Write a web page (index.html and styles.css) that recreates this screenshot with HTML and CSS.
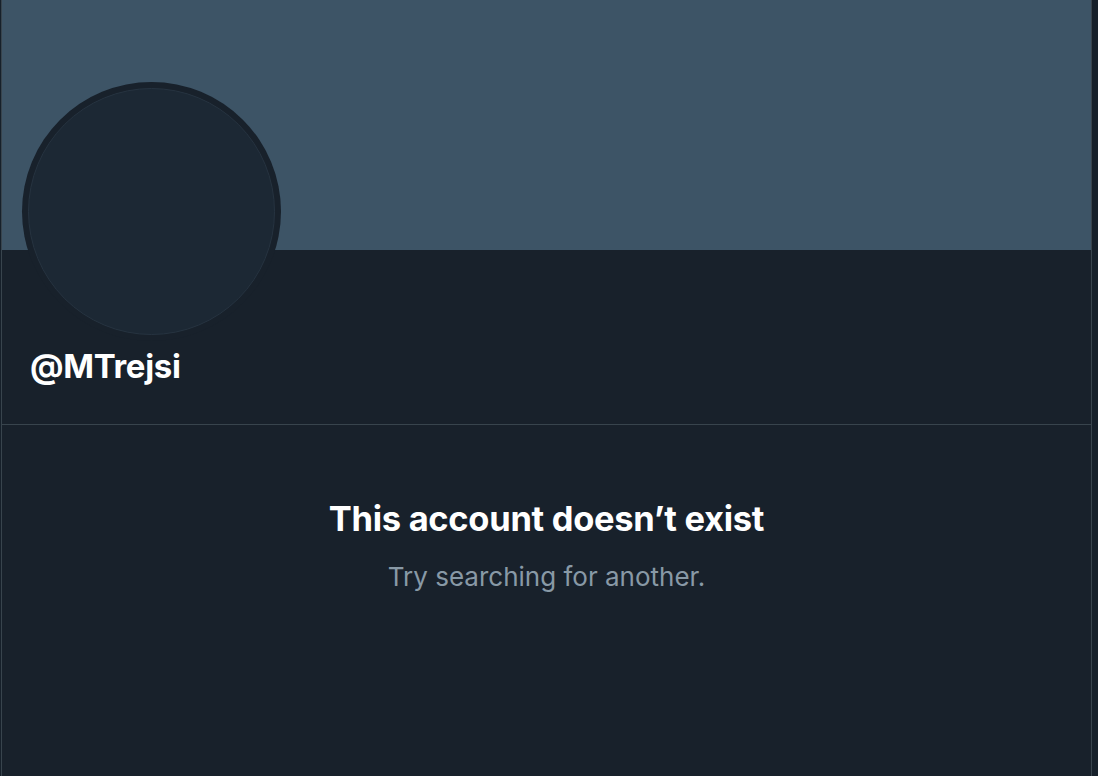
FILE: index.html
```html
<!DOCTYPE html>
<html>
<head>
<meta charset="utf-8">
<link rel="stylesheet" href="styles.css">
</head>
<body>
<main class="column">
  <div class="banner"></div>
  <section class="profile">
    <div class="avatar-ring"><div class="avatar"></div></div>
    <h2 class="handle">@MTrejsi</h2>
  </section>
  <section class="empty">
    <h1 class="empty-title">This account doesn’t exist</h1>
    <p class="empty-sub">Try searching for another.</p>
  </section>
</main>
</body>
</html>
```

FILE: styles.css
```css
html, body {
  margin: 0;
  padding: 0;
  height: 100%;
}
body {
  background: #16202a;
  font-family: Inter, "Noto Sans", "Liberation Sans", sans-serif;
  overflow: hidden;
}
.column {
  margin-left: 1px;
  width: 1089px;
  min-height: 776px;
  background: #18212b;
  border-left: 1px solid #38444d;
  border-right: 1px solid #38444d;
}
.banner {
  height: 250px;
  background: #3d5466;
}
.profile {
  display: flex;
  flex-direction: column;
  align-items: flex-start;
  padding: 0 20px;
  height: 175px;
  border-bottom: 1px solid #38444d;
  box-sizing: border-box;
}
.avatar-ring {
  width: 259px;
  height: 259px;
  margin-top: -168px;
  border-radius: 50%;
  background: #18212b;
  padding: 6px;
  box-sizing: border-box;
  flex-shrink: 0;
}
.avatar {
  width: 100%;
  height: 100%;
  border-radius: 50%;
  background: #1c2834;
  border: 1px solid #263340;
  box-sizing: border-box;
}
.handle {
  margin: 4px 0 0 8px;
  color: #ffffff;
  font-size: 33px;
  font-weight: 700;
  line-height: 42px;
  letter-spacing: -0.3px;
}
.empty {
  text-align: center;
  padding-top: 73px;
}
.empty-title {
  margin: 0;
  color: #ffffff;
  font-size: 34.5px;
  font-weight: 700;
  line-height: 42px;
  letter-spacing: -0.3px;
}
.empty-sub {
  margin: 20px 0 0 0;
  color: #8899a6;
  font-size: 26px;
  line-height: 34px;
}
```
